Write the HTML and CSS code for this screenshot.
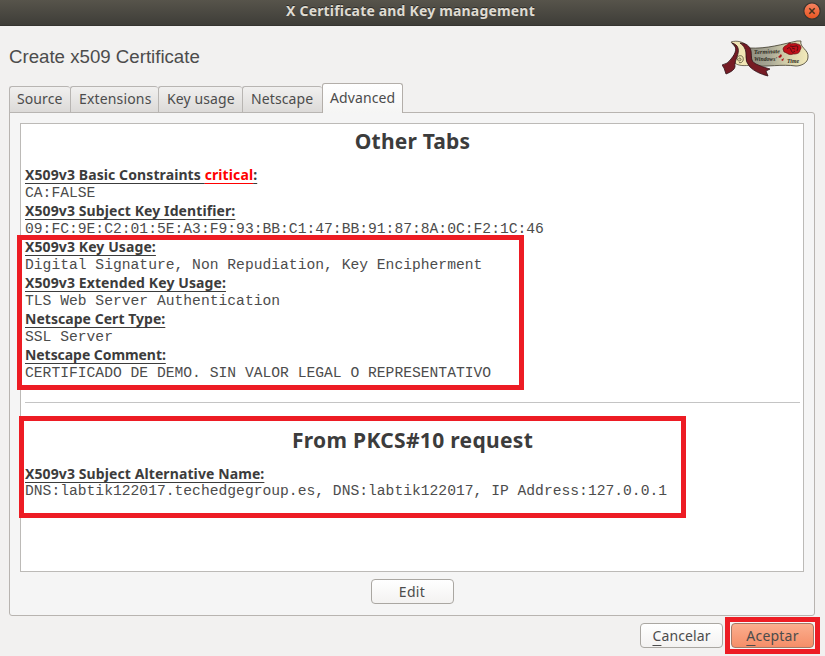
FILE: index.html
```html
<!DOCTYPE html>
<html lang="en">
<head>
<meta charset="utf-8">
<title>X Certificate and Key management</title>
<link rel="stylesheet" href="styles.css">
</head>
<body>
<div class="window">
  <header class="titlebar">
    <span class="window-title">X Certificate and Key management</span>
    <svg class="close" width="18" height="18" viewBox="0 0 18 18">
      <defs><linearGradient id="closeFill" x1="0" y1="0" x2="0" y2="1"><stop offset="0" stop-color="#f58462"/><stop offset="1" stop-color="#e9541f"/></linearGradient></defs>
      <circle cx="9" cy="9" r="8.2" fill="url(#closeFill)" stroke="#373631" stroke-width="1.2"/>
      <path d="M6.3 6.3l5.4 5.4M11.7 6.3l-5.4 5.4" stroke="#44321f" stroke-width="1.5"/>
    </svg>
  </header>
  <div class="heading">
    <h1>Create x509 Certificate</h1>
    <svg class="logo" width="88" height="38" viewBox="0 0 88 38">
      <defs>
        <linearGradient id="paper" x1="0" y1="0" x2="1" y2="0"><stop offset="0" stop-color="#8f8e80"/><stop offset=".35" stop-color="#a9a896"/><stop offset=".6" stop-color="#cfcba8"/><stop offset="1" stop-color="#f4ebbb"/></linearGradient>
      </defs>
      <path d="M27 9C45 10 61 5 75 2L79 2C77 8 87 11 86 18C86 24 79 27 74 27C60 25 45 28 31 27Z" fill="url(#paper)" stroke="#3f3a2b" stroke-width=".8"/>
      <path d="M9 3C15 1 22 3 25 7L29 26C23 27 16 27 13 24C11 18 16 14 14 9Z" fill="#f1e6b5" stroke="#3f3a2b" stroke-width=".7"/>
      <path d="M17 20.500c-1-2 2-2 2 0s-4 2-4-1 5-4 6-1-1 6-4 5" fill="none" stroke="#4f4830" stroke-width=".8"/>
      <path d="M10 4C16 8 14 14 9 20Q6 25 0 26L2 29L4 35Q12 32 13 28C12 21 18 15 16 9C15 6 13 5 10 4Z" fill="#761b24" stroke="#31151a" stroke-width=".8"/>
      <path d="M18 4C24 4 28 7 29 12C30 18 28 22 34 25Q40 28 48 30L44 32L46 37Q34 34 28 28Q23 23 24 16C24 10 22 7 18 4Z" fill="#761b24" stroke="#31151a" stroke-width=".8"/>
      <g class="logo-text"><text x="32" y="15" textLength="26" lengthAdjust="spacingAndGlyphs" transform="rotate(-2 32 15)">Terminate</text><text x="32" y="22" textLength="23" lengthAdjust="spacingAndGlyphs">Windows'</text><text x="65" y="23.500" textLength="12" lengthAdjust="spacingAndGlyphs">Time</text></g>
      <path d="M61 10C62 6 65 7 67 4C70 6 73 3 75 5C79 5 80 9 78 11C78 15 73 15 71 15C67 17 64 13 62 13Z" fill="#c01018" stroke="#620d12" stroke-width=".7"/>
      <path d="M65 10q3-3 4 1t4 1M68 7q3 1 6 0t1 5M70 9l3 1" fill="none" stroke="#4f0c12" stroke-width=".9"/>
      <path d="M56 18l3-3 1 2-2 2zM59 21l3-2-1 3z" fill="#a8141b"/>
    </svg>
  </div>
  <nav class="tabs">
    <div class="tab t1"><span>Source</span></div><div class="tab t2"><span>Extensions</span></div><div class="tab t3"><span>Key usage</span></div><div class="tab t4"><span>Netscape</span></div><div class="tab active"><span>Advanced</span></div>
  </nav>
  <main class="panel">
    <div class="document">
      <h2 class="other">Other Tabs</h2>
      <dl>
        <dt><span>X509v3 Basic Constraints <em>critical</em>:</span></dt><dd>CA:FALSE</dd>
        <dt><span>X509v3 Subject Key Identifier:</span></dt><dd>09:FC:9E:C2:01:5E:A3:F9:93:BB:C1:47:BB:91:87:8A:0C:F2:1C:46</dd>
        <dt><span>X509v3 Key Usage:</span></dt><dd>Digital Signature, Non Repudiation, Key Encipherment</dd>
        <dt><span>X509v3 Extended Key Usage:</span></dt><dd>TLS Web Server Authentication</dd>
        <dt class="cert-type"><span>Netscape Cert Type:</span></dt><dd>SSL Server</dd>
        <dt class="comment"><span>Netscape Comment:</span></dt><dd>CERTIFICADO DE DEMO. SIN VALOR LEGAL O REPRESENTATIVO</dd>
      </dl>
      <hr>
      <h2 class="request">From PKCS#10 request</h2>
      <dl class="request-names">
        <dt><span>X509v3 Subject Alternative Name:</span></dt><dd>DNS:labtik122017.techedgegroup.es, DNS:labtik122017, IP Address:127.0.0.1</dd>
      </dl>
    </div>
    <button class="button edit"><span>Edit</span></button>
  </main>
  <footer class="actions">
    <button class="button"><span><u>C</u>ancelar</span></button>
    <button class="button primary"><span><u>A</u>ceptar</span></button>
  </footer>
  <div class="mark mark-usage"></div>
  <div class="mark mark-request"></div>
  <div class="mark mark-accept"></div>
</div>
</body>
</html>
```

FILE: styles.css
```css
* { box-sizing: border-box; }
body { margin: 0; background: #f2f1f0; color: #4c4c4c; font-family: "Noto Sans", sans-serif; font-size: 14px; }
.window { position: relative; width: 825px; height: 656px; overflow: hidden; display: flex; flex-direction: column; }
.titlebar { height: 26px; flex: none; display: grid; grid-template-columns: 1fr auto 1fr; padding: 0 4px 0 0; background: linear-gradient(#57544b, #3e3d38); border-bottom: 1px solid #353430; color: #dfdbd2; }
.window-title { grid-column: 2; font-size: 14px; font-weight: 700; line-height: 22px; letter-spacing: .18px; white-space: nowrap; text-shadow: 0 -1px #2c2b27; }
.close { justify-self: end; margin-top: 2px; }
.heading { height: 57px; flex: none; display: flex; justify-content: space-between; padding: 0 15px 0 9px; }
h1 { margin: 20px 0 0; font: 400 18.67px/22px "Liberation Sans", sans-serif; }
.logo { margin-top: 13px; }
.logo-text { font: italic 700 6px "Liberation Serif", serif; fill: #2b2920; }
.tabs { height: 30px; flex: none; display: flex; align-items: flex-end; padding-left: 9px; position: relative; z-index: 1; }
.tab { height: 27px; padding-left: 8px; border: 1px solid #b8b5b2; border-right: 0; border-radius: 3px 3px 0 0; background: linear-gradient(#f1f0ef, #dcdad8); line-height: 24px; letter-spacing: .1px; white-space: nowrap; }
.t1 { width: 61px; padding-left: 7px; }
.t2 { width: 88px; letter-spacing: .16px; }
.t3 { width: 84px; }
.t4 { width: 80px; }
.tab.active { width: 81px; height: 30px; padding-left: 7px; border: 1px solid #b3aea9; border-bottom: 0; background: linear-gradient(#fff, #f5f5f4); line-height: 28px; }
.panel { height: 504px; margin: -1px 10px 0 9px; flex: none; border: 1px solid #b8b4b0; border-radius: 0 3px 3px 3px; background: #f5f5f5; padding: 10px; display: flex; flex-direction: column; align-items: center; }
.document { width: 784px; height: 449px; flex: none; border: 1px solid #bcbab7; background: #fff; padding: 0 3px 0 4px; }
h2 { margin: 0; height: 42px; text-align: center; font-size: 21px; font-weight: 700; line-height: 35px; letter-spacing: .18px; color: #3c3c3c; }
.request { letter-spacing: .32px; }
dl { margin: 0; }
dt, dd { margin: 0; height: 18px; line-height: 18px; white-space: nowrap; }
dt { color: #3c3c3c; font-weight: 700; letter-spacing: .1px; }
.cert-type { letter-spacing: .04px; }
.comment { letter-spacing: -.06px; }
dt span, em { text-decoration: underline; text-decoration-thickness: 1px; text-underline-offset: 3px; text-decoration-skip-ink: none; }
em { font-style: normal; color: #f00; }
dd { font-family: "Liberation Mono", monospace; font-size: 14.67px; }
.request-names dd { margin-top: -1px; }
hr { margin: 20px 0 20px; border: 0; height: 1px; background: #c4c4c4; }
.button { width: 83px; height: 25px; padding: 0; border: 1px solid #aaa7a2; border-radius: 4px; background: linear-gradient(#fff, #f3f2f1); color: #4c4c4c; font: 14px/22px "Noto Sans", sans-serif; letter-spacing: .1px; }
.edit { margin-top: 7px; letter-spacing: .3px; }
.actions { display: flex; justify-content: flex-end; gap: 8px; padding: 7px 11px 0 0; }
.primary { background: linear-gradient(#fbae8e, #f58e68); border-color: #a37a67; box-shadow: 0 0 0 1px #faf8f7; letter-spacing: .2px; }
u { text-decoration-thickness: 1px; text-underline-offset: 4px; }
.mark { position: absolute; border: 5px solid #ed1c24; }
.mark-usage { left: 17px; top: 235px; width: 507px; height: 155px; }
.mark-request { left: 19px; top: 416px; width: 667px; height: 102px; }
.mark-accept { left: 725px; top: 617px; width: 95px; height: 37px; }
```
